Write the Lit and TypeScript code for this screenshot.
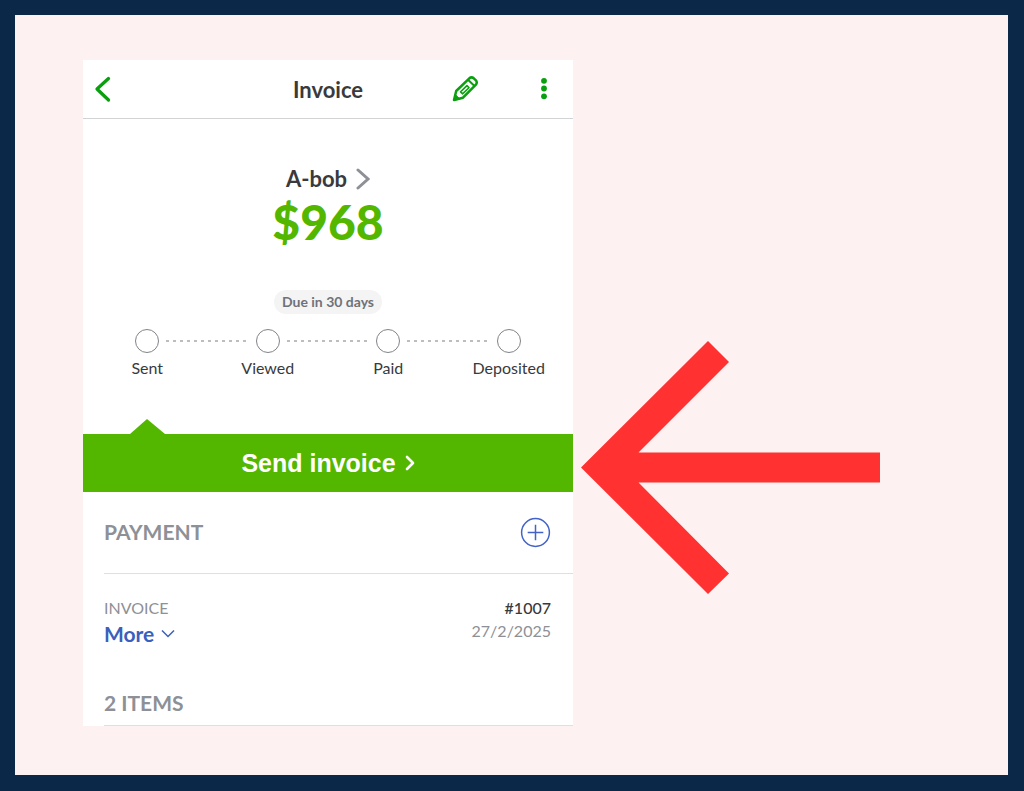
import { LitElement, html, css } from "lit";
import { customElement, property } from "lit/decorators.js";

@customElement("progress-steps")
class ProgressSteps extends LitElement {
  @property({ attribute: false }) steps: string[] = [];

  static styles = css`
    :host {
      display: block;
    }
    .steps {
      display: grid;
      grid-auto-flow: column;
      grid-auto-columns: 1fr;
      list-style: none;
      margin: 0;
      padding: 0 4px;
    }
    .track {
      display: grid;
      grid-template-columns: 1fr 24px 1fr;
      align-items: center;
    }
    .dot {
      grid-column: 2;
      height: 24px;
      box-sizing: border-box;
      border: 1px solid #808388;
      border-radius: 50%;
      background: #fff;
    }
    .link {
      height: 2px;
      margin: 0 -41px 0 7px;
      background: repeating-linear-gradient(90deg, #bbbdc0 0 3px, transparent 3px 7px);
    }
    .label {
      display: block;
      margin-top: 3px;
      text-align: center;
      font-size: 16px;
      line-height: 24px;
      color: #393a3d;
    }
  `;

  render() {
    return html`<ol class="steps">
      ${this.steps.map(
        (step, i) => html`<li>
          <div class="track">
            <span class="dot"></span>
            ${i < this.steps.length - 1 ? html`<span class="link"></span>` : null}
          </div>
          <span class="label">${step}</span>
        </li>`
      )}
    </ol>`;
  }
}

@customElement("invoice-card")
class InvoiceCard extends LitElement {
  static styles = css`
    :host {
      display: block;
      background: #fff;
      color: #393a3d;
    }
    svg {
      display: block;
      fill: none;
    }
    button,
    a {
      display: flex;
      align-items: center;
      justify-content: center;
      margin: 0;
      padding: 0;
      border: 0;
      background: none;
      font: inherit;
      color: inherit;
      text-decoration: none;
      cursor: pointer;
    }
    h1,
    h2,
    p {
      margin: 0;
    }
    .bar {
      display: grid;
      grid-template-columns: 1fr auto 1fr;
      align-items: center;
      height: 58px;
      padding: 0 16px 0 8px;
      border-bottom: 1px solid #d2d3d5;
      color: #0a9f0e;
    }
    .back {
      justify-self: start;
      width: 24px;
      height: 32px;
    }
    .title {
      padding: 2px 0 0 8px;
      font-size: 22px;
      line-height: 28px;
      font-weight: 700;
      color: #393a3d;
    }
    .actions {
      display: flex;
      justify-content: flex-end;
      gap: 52px;
    }
    .summary {
      display: flex;
      flex-direction: column;
      align-items: center;
      padding-top: 46px;
    }
    .customer {
      gap: 9px;
      font-size: 22px;
      line-height: 28px;
      font-weight: 700;
    }
    .amount {
      font-size: 48px;
      line-height: 58px;
      font-weight: 900;
      color: #53b700;
    }
    .due {
      margin: 39px 0 15px;
      padding: 0 8px;
      border-radius: 12px;
      background: #f4f4f5;
      font-size: 14px;
      line-height: 24px;
      font-weight: 700;
      color: #6f7277;
    }
    .pointer {
      margin: 39px 0 0 47px;
    }
    .send {
      width: 100%;
      height: 58px;
      gap: 9px;
      background: #53b700;
      color: #fff;
      font-family: "Liberation Sans", Arial, sans-serif;
      font-size: 25px;
      font-weight: 700;
    }
    .section {
      display: flex;
      align-items: center;
      justify-content: space-between;
      margin-left: 21px;
      padding-right: 22px;
      border-bottom: 1px solid #dfdfe2;
    }
    .payment {
      height: 81px;
    }
    .heading {
      padding-bottom: 2px;
      font-size: 21px;
      line-height: 28px;
      font-weight: 700;
      color: #8d9096;
    }
    .details {
      display: flex;
      justify-content: space-between;
      padding: 22px 22px 0 21px;
      font-size: 16px;
      line-height: 24px;
      color: #8d9096;
    }
    .more {
      gap: 7px;
      font-size: 21px;
      line-height: 28px;
      font-weight: 700;
      color: #3a5fbd;
    }
    .meta {
      text-align: right;
      line-height: 23px;
    }
    .number {
      color: #393a3d;
      font-weight: 500;
    }
    .items {
      padding-top: 41px;
      padding-bottom: 6px;
    }
  `;

  render() {
    return html`
      <header class="bar">
        <button class="back" aria-label="Back">
          <svg width="24" height="32" viewBox="0 0 24 32" stroke="currentColor" stroke-width="3.300" stroke-linecap="round" stroke-linejoin="round">
            <path d="M17.500 5.500 6 16l11.500 11"></path>
          </svg>
        </button>
        <h1 class="title">Invoice</h1>
        <div class="actions">
          <button aria-label="Edit">
            <svg width="28" height="28" viewBox="0 0 28 28" stroke="currentColor" stroke-width="2.500" stroke-linejoin="round" stroke-linecap="round">
              <path d="M3 25 5.200 16 18.300 3.300Q20.500 1.500 22.800 3.300L24.900 5.300Q26.600 7.500 24.900 9.700L12 22.700Z"></path>
              <path d="M17.500 5.200 23 10.500" stroke-width="2"></path>
              <path d="M9.600 16.800 16 10.600 18 12.700 11.700 18.800Z" stroke-width="1.600"></path>
              <path d="M3 25 4.300 19.500 8.500 23.700Z" fill="currentColor" stroke-width="1"></path>
            </svg>
          </button>
          <button aria-label="More options">
            <svg width="26" height="28" viewBox="0 0 26 28" style="fill: currentColor">
              <circle cx="13" cy="5.800" r="2.900"></circle>
              <circle cx="13" cy="13.500" r="2.900"></circle>
              <circle cx="13" cy="21.300" r="2.900"></circle>
            </svg>
          </button>
        </div>
      </header>

      <section class="summary">
        <a class="customer" href="#customer">
          A-bob
          <svg width="14" height="22" viewBox="0 0 14 22" stroke="#8d9096" stroke-width="3" stroke-linecap="round">
            <path d="M2 2 12 11 2 20"></path>
          </svg>
        </a>
        <p class="amount">$968</p>
        <p class="due">Due in 30 days</p>
      </section>
      <progress-steps .steps=${["Sent", "Viewed", "Paid", "Deposited"]}></progress-steps>

      <svg class="pointer" width="35" height="15" viewBox="0 0 35 15">
        <path d="M0 15 17 0 35 15Z" fill="#53b700"></path>
      </svg>
      <button class="send">
        Send invoice
        <svg width="10" height="16" viewBox="0 0 10 16" stroke="currentColor" stroke-width="2.600" stroke-linecap="round" stroke-linejoin="round">
          <path d="M2 2 8 8 2 14"></path>
        </svg>
      </button>

      <section class="section payment">
        <h2 class="heading">PAYMENT</h2>
        <button aria-label="Add payment">
          <svg width="31" height="31" viewBox="0 0 31 31" stroke="#4463c7" stroke-width="1.500">
            <circle cx="15.500" cy="15.500" r="13.900"></circle>
            <path d="M15.500 7.700V23.300M7.700 15.500H23.300"></path>
          </svg>
        </button>
      </section>

      <section class="details">
        <div>
          <p>INVOICE</p>
          <button class="more">
            More
            <svg width="14" height="10" viewBox="0 0 14 10" stroke="currentColor" stroke-width="1.500">
              <path d="M1 1.500 7 7.500 13 1.500"></path>
            </svg>
          </button>
        </div>
        <div class="meta">
          <p class="number">#1007</p>
          <p>27/2/2025</p>
        </div>
      </section>

      <section class="section items">
        <h2 class="heading">2 ITEMS</h2>
      </section>
    `;
  }
}

@customElement("app-root")
class AppRoot extends LitElement {
  static styles = css`
    :host {
      display: block;
      box-sizing: border-box;
      min-height: 100vh;
      padding: 15px 16px 16px 15px;
      background: #0c2849;
      font-family: Lato, "Liberation Sans", sans-serif;
    }
    .stage {
      display: flex;
      align-items: flex-start;
      gap: 8px;
      box-sizing: border-box;
      min-height: calc(100vh - 31px);
      padding: 45px 68px;
      background: #fef1f1;
    }
    .card {
      flex: 0 1 490px;
    }
    .callout {
      flex: 0 1 299px;
      min-width: 0;
      margin-top: 281px;
    }
  `;

  render() {
    return html`<main class="stage">
      <invoice-card class="card"></invoice-card>
      <svg class="callout" viewBox="0 0 299 253" role="img" aria-label="Arrow pointing to the send button">
        <path d="M0 126.500 127 0 148 21 57.500 111.500H299V141.500H57.500L148 232.500 127 253Z" fill="#ff3131"></path>
      </svg>
    </main>`;
  }
}
